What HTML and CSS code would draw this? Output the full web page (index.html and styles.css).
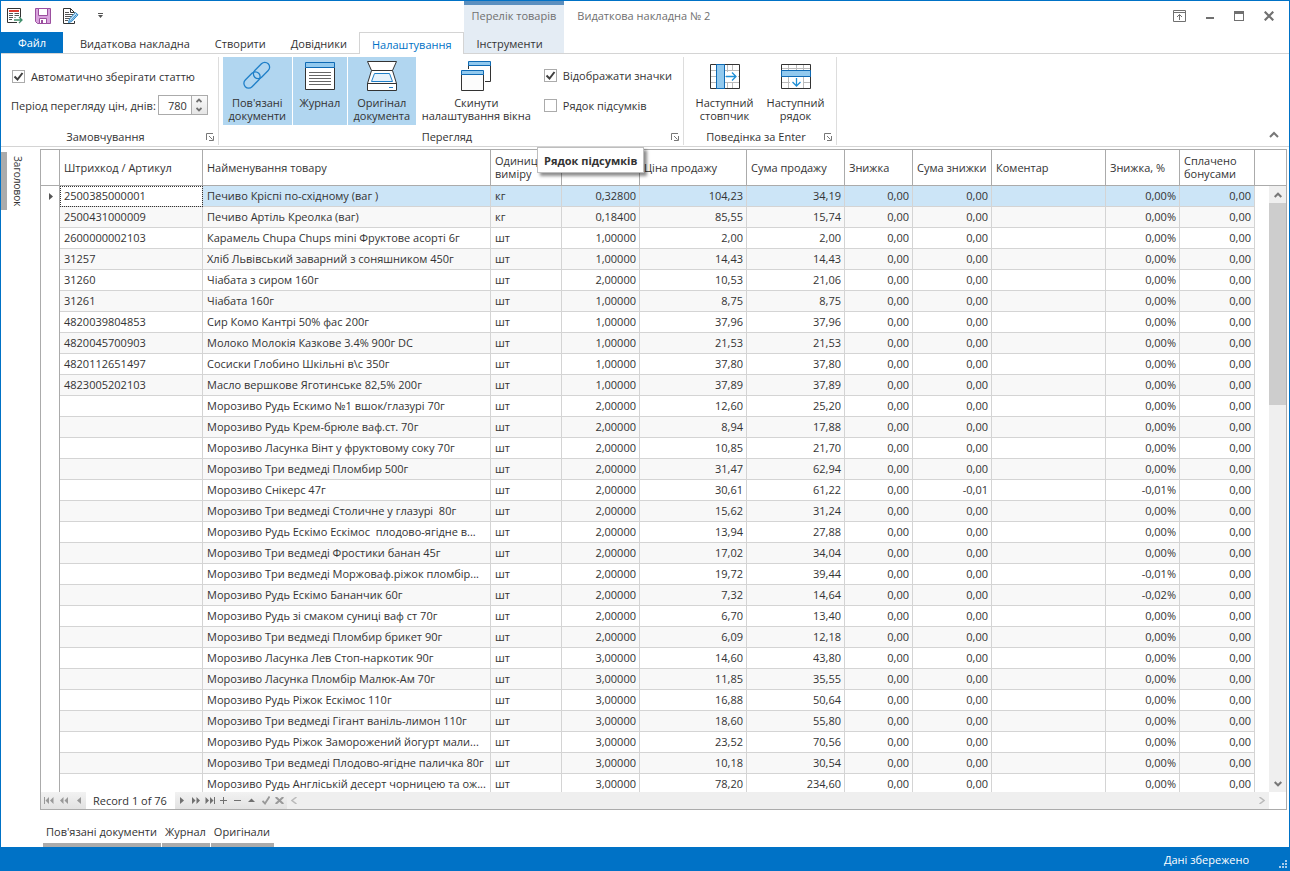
FILE: index.html
```html
<!DOCTYPE html>
<html lang="uk">
<head>
<meta charset="utf-8">
<title>Видаткова накладна № 2</title>
<link rel="stylesheet" href="styles.css">
</head>
<body>
<div class="window">
  <header class="header">
    <div class="quick">
      <button class="quick-btn" aria-label="Провести"><svg width="16" height="16" viewBox="0 0 16 16" fill="none"><path d="M10 14.500H.5V.5h13v9" stroke="#333"/><path d="M2 2h10v2H2z" fill="#e03c31"/><path d="M2 5.500h4M7.500 5.500h4.500M2 7.500h4M7.500 7.500h4.500M2 9.500h4M7.500 9.500h1M2 11.500h3" stroke="#555"/><path d="M7 12h8M12 9l3 3-3 3" stroke="#3f8f6b" stroke-width="1.300"/></svg></button>
      <button class="quick-btn" aria-label="Зберегти"><svg width="16" height="16" viewBox="0 0 16 16"><path d="M.5.5h15v15h-13l-2-2z" fill="#d9a3dd" stroke="#9b4f9f"/><path d="M3.500.5h9v7h-9zM4.500 10.500h7v5h-7z" fill="#fff" stroke="#9b4f9f"/><path d="M6 12h2v3H6z" fill="#9b4f9f"/></svg></button>
      <button class="quick-btn" aria-label="Редагувати"><svg width="16" height="16" viewBox="0 0 16 16" fill="none"><path d="M11.500 13v2.500H.5V.5h7l4 4" stroke="#333"/><path d="M7.500.5v4h4" stroke="#333"/><path d="M2 4.500h4M2 6.500h8M2 8.500h7M2 10.500h5M2 12.500h3" stroke="#555"/><path d="M5.500 14.500l1-3.500 6-6.500 2.500 2.300-6.300 6.700z" fill="#c9e3f6" stroke="#2a86c8"/><path d="M7.500 13l6-6.500" stroke="#2a86c8"/></svg></button>
      <button class="quick-menu" aria-label="Налаштувати панель"><svg width="5" height="5" viewBox="0 0 5 5"><path d="M0 0h5v1H0zM0 2h5L2.500 5z" fill="#555"/></svg></button>
    </div>
    <div class="context-title">Перелік товарів</div>
    <div class="title-row">
      <h1 class="title">Видаткова накладна № 2</h1>
      <div class="window-buttons">
        <button aria-label="Параметри стрічки"><svg width="13" height="12" viewBox="0 0 13 12" fill="none" stroke="#707070"><path d="M.5.5h12v11H.5zM0 2.500h13M6.500 10V4.500M4 7l2.500-2.500L9 7"/></svg></button>
        <button aria-label="Згорнути"><svg width="8" height="12" viewBox="0 0 8 12"><path d="M0 7h8v2H0z" fill="#707070"/></svg></button>
        <button aria-label="Розгорнути"><svg width="10" height="10" viewBox="0 0 10 10"><path d="M0 0h10v10H0zM1 3v6h8V3z" fill="#707070" fill-rule="evenodd"/></svg></button>
        <button aria-label="Закрити"><svg width="10" height="10" viewBox="0 0 10 10" stroke="#707070" stroke-width="2.200"><path d="M.7.7l8.600 8.600M9.300.7L.7 9.300"/></svg></button>
      </div>
    </div>
    <nav class="tabs">
      <button class="file-tab">Файл</button>
      <button class="tab">Видаткова накладна</button>
      <button class="tab">Створити</button>
      <button class="tab">Довідники</button>
      <button class="tab tab-active">Налаштування</button>
    </nav>
    <div class="context-tabs"><button class="tab">Інструменти</button></div>
    <div class="tabs-rest"></div>
  </header>

  <section class="ribbon">
    <div class="group">
      <div class="group-body defaults">
        <label class="check"><input type="checkbox" checked>Автоматично зберігати статтю</label>
        <div class="period">
          <label for="days">Період перегляду цін, днів:</label>
          <div class="spin">
            <input id="days" type="text" value="780">
            <div class="spin-buttons">
              <button aria-label="Більше"><svg width="6" height="5" viewBox="0 0 6 5" fill="none" stroke="#707070" stroke-width="1.800"><path d="M.5 4L3 1.500 5.500 4"/></svg></button>
              <button aria-label="Менше"><svg width="6" height="5" viewBox="0 0 6 5" fill="none" stroke="#707070" stroke-width="1.800"><path d="M.5 1L3 3.500 5.500 1"/></svg></button>
            </div>
          </div>
        </div>
      </div>
      <footer class="caption"><span>Замовчування</span><button class="launcher" aria-label="Параметри замовчування"><svg width="8" height="8" viewBox="0 0 8 8" fill="none" stroke="#777"><path d="M.5 7V.5H7M3 3l3.500 3.500M7.500 3v4.500H3"/></svg></button></footer>
    </div>

    <div class="group">
      <div class="group-body">
        <div class="big-buttons">
          <button class="big pressed links"><svg width="32" height="32" viewBox="0 0 32 32" fill="none" stroke="#1f7fc8" stroke-width="1.300"><rect x="-9.500" y="-4.800" width="19" height="9.600" rx="4.800" transform="translate(20.500 10.500) rotate(-45)"/><rect x="-9.500" y="-4.800" width="19" height="9.600" rx="4.800" transform="translate(11 20) rotate(-45)"/></svg><span>Пов'язані<br>документи</span></button>
          <button class="big pressed journal"><svg width="32" height="32" viewBox="0 0 32 32"><path d="M1.500 7.500h29v22h-29z" fill="#fff" stroke="#333"/><path d="M1.500 2.500h29v5h-29z" fill="#92c9ee" stroke="#0f6ab4"/><path d="M5 12.500h22M5 15.500h22M5 18.500h22M5 21.500h22M5 24.500h22" stroke="#666"/></svg><span>Журнал</span></button>
          <button class="big pressed original"><svg width="32" height="32" viewBox="0 0 32 32" fill="#fff" stroke="#333"><path d="M1.500 1.500h29l-4 9h-21z"/><path d="M5.500 10.500h21l4 13h-29zM1.500 23.500h29v7h-29z"/><path d="M8.500 13.500h15l3 8h-21z" fill="#e7f2fb" stroke="#1f7fc8"/><path d="M23 27.500h4" stroke="#1f7fc8"/></svg><span>Оригінал<br>документа</span></button>
          <button class="big reset"><svg width="32" height="32" viewBox="0 0 32 32"><path d="M8.500 5.500h22v17h-22z" fill="#fff"/><path d="M30.500 5v16.500H25M8.500 5v4" fill="none" stroke="#333"/><path d="M8.500 1.500h22v4h-22z" fill="#92c9ee" stroke="#0f6ab4"/><path d="M1.500 14.500h22v16h-22z" fill="#fcfcfc" stroke="#333"/><path d="M1.500 10.500h22v4h-22z" fill="#92c9ee" stroke="#0f6ab4"/></svg><span>Скинути<br>налаштування вікна</span></button>
        </div>
        <div class="view-checks">
          <label class="check"><input type="checkbox" checked>Відображати значки</label>
          <label class="check"><input type="checkbox">Рядок підсумків</label>
        </div>
      </div>
      <footer class="caption"><span>Перегляд</span><button class="launcher" aria-label="Параметри перегляду"><svg width="8" height="8" viewBox="0 0 8 8" fill="none" stroke="#777"><path d="M.5 7V.5H7M3 3l3.500 3.500M7.500 3v4.500H3"/></svg></button></footer>
    </div>

    <div class="group">
      <div class="group-body enter">
        <button class="big next"><svg width="32" height="32" viewBox="0 0 32 32" fill="none"><path d="M2 10.500h28M2 16.500h28M2 22.500h28M18.500 5v23M23.500 5v6M23.500 22v6" stroke="#bbb"/><path d="M17 12h12v10H17z" fill="#fff"/><path d="M1.500 4.500h29v24h-29z" stroke="#333"/><path d="M7.500 4.500h8v24h-8z" fill="#92c9ee" stroke="#0f6ab4"/><path d="M17 16.500h10M23 12.500l4 4-4 4" stroke="#1f8fd6" stroke-width="1.300"/></svg><span>Наступний<br>стовпчик</span></button>
        <button class="big next"><svg width="32" height="32" viewBox="0 0 32 32" fill="none"><path d="M2 8.500h28M2 22.500h28M8.500 5v23M16.500 5v6M23.500 5v23" stroke="#bbb"/><path d="M10 17h13v11H10z" fill="#fff"/><path d="M1.500 4.500h29v24h-29z" stroke="#333"/><path d="M1.500 10.500h29v6h-29z" fill="#92c9ee" stroke="#0f6ab4"/><path d="M16.500 18v8M12.500 22l4 4 4-4" stroke="#1f8fd6" stroke-width="1.300"/></svg><span>Наступний<br>рядок</span></button>
      </div>
      <footer class="caption"><span>Поведінка за Enter</span><button class="launcher" aria-label="Параметри Enter"><svg width="8" height="8" viewBox="0 0 8 8" fill="none" stroke="#777"><path d="M.5 7V.5H7M3 3l3.500 3.500M7.500 3v4.500H3"/></svg></button></footer>
    </div>
    <button class="collapse" aria-label="Згорнути стрічку"><svg width="10" height="7" viewBox="0 0 10 7" fill="none" stroke="#777" stroke-width="2"><path d="M1 6l4-4 4 4"/></svg></button>
    <div class="tooltip" role="tooltip">Рядок підсумків</div>
  </section>

  <main class="workspace">
    <aside class="side"><button class="side-tab">Заголовок</button></aside>
    <section class="grid">
      <div class="grid-view">
        <table class="items">
          <colgroup><col class="c-mark"><col class="c-code"><col class="c-name"><col class="c-unit"><col class="c-qty"><col class="c-price"><col class="c-sum"><col class="c-disc"><col class="c-dsum"><col class="c-note"><col class="c-pct"><col class="c-bonus"><col></colgroup>
          <thead>
            <tr><th></th><th>Штрихкод / Артикул</th><th>Найменування товару</th><th>Одиниц<br>виміру</th><th aria-label="Кількість"></th><th>Ціна продажу</th><th>Сума продажу</th><th>Знижка</th><th>Сума знижки</th><th>Коментар</th><th>Знижка, %</th><th>Сплачено<br>бонусами</th><th class="fill"></th></tr>
          </thead>
          <tbody id="rows"></tbody>
        </table>
        <div class="vscroll">
          <button aria-label="Вгору"><svg width="8" height="6" viewBox="0 0 8 6" fill="none" stroke="#777" stroke-width="2"><path d="M.7 5L4 1.700 7.300 5"/></svg></button>
          <div class="thumb"></div>
          <button class="down" aria-label="Вниз"><svg width="8" height="6" viewBox="0 0 8 6" fill="none" stroke="#777" stroke-width="2"><path d="M.7 1L4 4.300 7.300 1"/></svg></button>
        </div>
      </div>
      <div class="navigator">
        <div class="nav-back">
          <button aria-label="Перший"><svg width="10" height="7" viewBox="0 0 10 7" fill="#999"><path d="M0 0h1v7H0zM5 0v7L1.500 3.500zM9.500 0v7L6 3.500z"/></svg></button>
          <button aria-label="Попередня сторінка"><svg width="8" height="7" viewBox="0 0 8 7" fill="#999"><path d="M3.500 0v7L0 3.500zM8 0v7L4.500 3.500z"/></svg></button>
          <button aria-label="Попередній"><svg width="4" height="7" viewBox="0 0 4 7" fill="#999"><path d="M4 0v7L0 3.500z"/></svg></button>
        </div>
        <span class="record">Record 1 of 76</span>
        <div class="nav-next">
          <button aria-label="Наступний"><svg width="4" height="7" viewBox="0 0 4 7" fill="#707070"><path d="M0 0v7l4-3.500z"/></svg></button>
          <button aria-label="Наступна сторінка"><svg width="8" height="7" viewBox="0 0 8 7" fill="#707070"><path d="M0 0v7l3.500-3.500zM4.500 0v7L8 3.500z"/></svg></button>
          <button aria-label="Останній"><svg width="10" height="7" viewBox="0 0 10 7" fill="#707070"><path d="M9 0h1v7H9zM.5 0v7L4 3.500zM5 0v7l3.500-3.500z"/></svg></button>
          <button aria-label="Додати"><svg width="7" height="7" viewBox="0 0 7 7" fill="#707070"><path d="M3 0h1v7H3zM0 3h7v1H0z"/></svg></button>
          <button aria-label="Видалити"><svg width="7" height="7" viewBox="0 0 7 7" fill="#707070"><path d="M0 3h7v1H0z"/></svg></button>
          <button aria-label="Редагувати рядок"><svg width="7" height="7" viewBox="0 0 7 7" fill="#707070"><path d="M0 5h7L3.500 1.500z"/></svg></button>
          <button aria-label="Застосувати"><svg width="8" height="9" viewBox="0 0 8 9" fill="none" stroke="#999" stroke-width="1.800"><path d="M.5 5L3 7.500 7.500.5"/></svg></button>
          <button aria-label="Скасувати"><svg width="9" height="7" viewBox="0 0 9 7" fill="none" stroke="#999" stroke-width="2"><path d="M.7 0l7.600 7M8.300 0L.7 7"/></svg></button>
        </div>
        <div class="hscroll">
          <button aria-label="Вліво"><svg width="6" height="7" viewBox="0 0 6 7" fill="none" stroke="#bbb" stroke-width="1.500"><path d="M5.500 0L1 3.500 5.500 7"/></svg></button>
          <button aria-label="Вправо"><svg width="6" height="7" viewBox="0 0 6 7" fill="none" stroke="#bbb" stroke-width="1.500"><path d="M.5 0L5 3.500.5 7"/></svg></button>
        </div>
      </div>
    </section>
  </main>

  <nav class="panels">
    <button>Пов'язані документи</button>
    <button>Журнал</button>
    <button>Оригінали</button>
  </nav>
  <footer class="status">
    <span>Дані збережено</span>
    <svg width="8" height="8" viewBox="0 0 8 8" fill="#a8cdeb"><path d="M6 0h2v2H6zM3 3h2v2H3zM6 3h2v2H6zM0 6h2v2H0zM3 6h2v2H3zM6 6h2v2H6z"/></svg>
  </footer>
</div>
<script src="app.js"></script>
</body>
</html>
```
FILE: styles.css
```css
* { box-sizing: border-box; }
body {
  margin: 0;
  font: 11px/13px "Open Sans", "Noto Sans", sans-serif;
  color: #333;
  background: #fff;
}
button, input { font: inherit; color: inherit; }
button {
  display: flex;
  align-items: center;
  justify-content: center;
  padding: 0;
  border: 0;
  background: none;
  white-space: nowrap;
}
svg { display: block; flex: none; }

.window {
  display: flex;
  flex-direction: column;
  height: 100vh;
  border: 1px solid #0072c6;
  border-bottom: 0;
}

/* Title bar and ribbon tabs */
.header {
  display: grid;
  grid-template-columns: auto auto 1fr;
  grid-template-rows: 31px 22px;
}
.quick { display: flex; align-items: center; gap: 12px; padding: 0 0 2px 6px; }
.quick-menu { margin-left: 7px; }
.context-title {
  padding: 4px 8px 0;
  border-top: 4px solid #5b8fbf;
  background: #e4ecf4;
  color: #707070;
  white-space: nowrap;
}
.title-row {
  display: flex;
  align-items: center;
  justify-content: space-between;
  padding: 0 15px 2px 13px;
}
.title { margin: 0; font: inherit; color: #707070; }
.window-buttons { display: flex; gap: 20px; }
.tabs { display: flex; border-bottom: 1px solid #d4d4d4; }
.file-tab { width: 62px; margin-right: 4px; background: #0072c6; color: #fff; }
.tab { padding: 2px 12px 0 13px; }
.tab-active {
  margin-bottom: -1px;
  padding: 1px 11px 0 12px;
  border: 1px solid #d4d4d4;
  border-bottom: 0;
  background: #fff;
  color: #0072c6;
}
.context-tabs { display: flex; background: #e4ecf4; border-bottom: 1px solid #d4d4d4; }
.tabs-rest { border-bottom: 1px solid #d4d4d4; }

/* Ribbon */
.ribbon {
  position: relative;
  display: flex;
  padding: 3px 0 1px;
  border-bottom: 1px solid #d4d4d4;
}
.group {
  display: flex;
  flex-direction: column;
  padding: 0 4px;
  border-right: 1px solid #ddd;
}
.group-body { display: flex; height: 71px; }
.defaults { flex-direction: column; padding: 12px 5px 0; gap: 12px; }
.check { display: flex; align-items: center; gap: 6px; height: 14px; white-space: nowrap; }
.check input {
  appearance: none;
  width: 13px;
  height: 13px;
  margin: 0;
  border: 1px solid #ababab;
  background: #fff;
}
.check input:checked {
  background: url("data:image/svg+xml,%3Csvg xmlns='http://www.w3.org/2000/svg' viewBox='0 0 11 11'%3E%3Cpath d='M1.500 5.500l3 3L9.500 2' fill='none' stroke='%23404040' stroke-width='2'/%3E%3C/svg%3E");
}
.defaults .check { padding-left: 2px; }
.period { display: flex; align-items: center; gap: 2px; padding-left: 1px; white-space: nowrap; }
.spin { display: flex; width: 50px; height: 20px; border: 1px solid #ababab; }
.spin input { width: 32px; padding: 0 4px; border: 0; text-align: right; outline: 0; }
.spin-buttons {
  display: flex;
  flex: 1;
  flex-direction: column;
  border-left: 1px solid #ababab;
  background: linear-gradient(#fafafa, #e6e6e6);
}
.spin-buttons button { flex: 1; }
.defaults { padding-right: 6px; }
.caption { display: flex; align-items: center; height: 17px; }
.caption span { flex: 1; text-align: center; }
.big-buttons { display: flex; gap: 1px; }
.big {
  flex-direction: column;
  justify-content: flex-start;
  gap: 4px;
  height: 68px;
  padding-top: 3px;
}
.big span { line-height: 13px; }
.pressed { background: #b1d6f0; }
.links { width: 69px; }
.journal { width: 54px; }
.original { width: 68px; }
.reset { width: 119px; }
.view-checks {
  display: flex;
  flex-direction: column;
  gap: 16px;
  padding: 11px 7px 0 8px;
}
.enter { padding: 0 1px; }
.next { width: 71px; }
.collapse { align-self: flex-end; margin: 0 10px 7px auto; }
.tooltip {
  position: absolute;
  top: 93px;
  left: 536px;
  z-index: 2;
  padding: 6px 6px 5px;
  border: 1px solid #bebebe;
  background: #fff;
  box-shadow: 3px 3px 3px rgba(0, 0, 0, .45);
  font-weight: bold;
  white-space: nowrap;
}

/* Workspace */
.workspace { display: flex; flex: 1; min-height: 0; padding: 2px 2px 0 0; }
.side { width: 39px; padding-top: 3px; }
.side-tab {
  height: 58px;
  padding: 0 0 0 10px;
  box-shadow: inset 6px 0 #ababab;
  font-size: 10px;
  writing-mode: vertical-rl;
}
.grid {
  display: flex;
  flex: 1;
  flex-direction: column;
  min-width: 0;
  border: 1px solid #ababab;
}
.grid-view { position: relative; flex: 1; min-height: 0; overflow: hidden; }
.items {
  width: 100%;
  border-spacing: 0;
  table-layout: fixed;
}
.c-mark { width: 19px; }
.c-code { width: 143px; }
.c-name { width: 288px; }
.c-unit { width: 71px; }
.c-qty { width: 78px; }
.c-price { width: 107px; }
.c-sum { width: 98px; }
.c-disc { width: 68px; }
.c-dsum { width: 79px; }
.c-note { width: 114px; }
.c-pct { width: 74px; }
.c-bonus { width: 75px; }
.items th {
  height: 36px;
  padding: 0 4px 1px;
  border-right: 1px solid #ababab;
  border-bottom: 1px solid #ababab;
  font-weight: normal;
  text-align: left;
  white-space: nowrap;
}
.items td {
  height: 21px;
  padding: 0 4px 2px;
  border-right: 1px solid #d4d4d4;
  border-bottom: 1px solid #d4d4d4;
  overflow: hidden;
  text-overflow: clip;
  white-space: pre;
}
.items tr:nth-child(even) td { background: #f8f8f8; }
.items td.num { padding-right: 3px; text-align: right; }
.items tr td.mark { padding: 0 0 0 8px; border-right-color: #ababab; border-bottom: 0; background: #fff; }
.items .fill, .items tr td.fill { border-right: 0; background: #fff; }
.items td.fill { border-bottom: 0; }
.items tr.selected td { background: #cce5f7; }
.items tr.selected td.mark, .items tr.selected td.fill { background: #fff; }
.items tr.selected td.focused { background: #fff; outline: 1px dotted #333; outline-offset: -1px; }
.vscroll {
  position: absolute;
  top: 36px;
  right: 0;
  bottom: 0;
  display: flex;
  flex-direction: column;
  width: 17px;
  background: #efefef;
}
.vscroll button { height: 17px; }
.thumb { height: 202px; background: #cdcdcd; }
.down { margin-top: auto; }
.navigator {
  display: flex;
  height: 17px;
  padding-right: 17px;
}
.nav-back, .nav-next { display: flex; background: linear-gradient(#f2f2f2, #e2e2e2); }
.nav-back button { width: 15px; }
.nav-next button { width: 14px; }
.record { padding: 2px 8px 0 7px; white-space: nowrap; }
.hscroll { display: flex; flex: 1; justify-content: space-between; background: #efefef; }
.hscroll button { width: 15px; }

/* Docked panels and status bar */
.panels { display: flex; gap: 1px; padding: 13px 0 0 42px; }
.panels button { height: 24px; padding: 0 4px 3px 3px; border-bottom: 4px solid #ababab; }
.status {
  display: flex;
  align-items: center;
  justify-content: flex-end;
  gap: 30px;
  height: 24px;
  padding-right: 2px;
  background: #0072c6;
  color: #fff;
}
.status svg { align-self: flex-end; margin-bottom: 3px; }
```
FILE: app.js
```js
const data = `2500385000001|Печиво Кріспі по-східному (ваг )|кг|0,32800|104,23|34,19
2500431000009|Печиво Артіль Креолка (ваг)|кг|0,18400|85,55|15,74
2600000002103|Карамель Chupa Chups mini Фруктове асорті 6г|шт|1,00000|2,00|2,00
31257|Хліб Львівський заварний з соняшником 450г|шт|1,00000|14,43|14,43
31260|Чіабата з сиром 160г|шт|2,00000|10,53|21,06
31261|Чіабата 160г|шт|1,00000|8,75|8,75
4820039804853|Сир Комо Кантрі 50% фас 200г|шт|1,00000|37,96|37,96
4820045700903|Молоко Молокія Казкове 3.4% 900г DC|шт|1,00000|21,53|21,53
4820112651497|Сосиски Глобино Шкільні в\\с 350г|шт|1,00000|37,80|37,80
4823005202103|Масло вершкове Яготинське 82,5% 200г|шт|1,00000|37,89|37,89
|Морозиво Рудь Ескимо №1 вшок/глазурі 70г|шт|2,00000|12,60|25,20
|Морозиво Рудь Крем-брюле ваф.ст. 70г|шт|2,00000|8,94|17,88
|Морозиво Ласунка Вінт у фруктовому соку 70г|шт|2,00000|10,85|21,70
|Морозиво Три ведмеді Пломбир 500г|шт|2,00000|31,47|62,94
|Морозиво Снікерс 47г|шт|2,00000|30,61|61,22|-0,01|-0,01%
|Морозиво Три ведмеді Столичне у глазурі  80г|шт|2,00000|15,62|31,24
|Морозиво Рудь Ескімо Ескімос  плодово-ягідне в...|шт|2,00000|13,94|27,88
|Морозиво Три ведмеді Фростики банан 45г|шт|2,00000|17,02|34,04
|Морозиво Три ведмеді Моржоваф.ріжок пломбір...|шт|2,00000|19,72|39,44|0,00|-0,01%
|Морозиво Рудь Ескімо Бананчик 60г|шт|2,00000|7,32|14,64|0,00|-0,02%
|Морозиво Рудь зі смаком суниці ваф ст 70г|шт|2,00000|6,70|13,40
|Морозиво Три ведмеді Пломбир брикет 90г|шт|2,00000|6,09|12,18
|Морозиво Ласунка Лев Стоп-наркотик 90г|шт|3,00000|14,60|43,80
|Морозиво Ласунка Пломбір Малюк-Ам 70г|шт|3,00000|11,85|35,55
|Морозиво Рудь Ріжок Ескімос 110г|шт|3,00000|16,88|50,64
|Морозиво Три ведмеді Гігант ваніль-лимон 110г|шт|3,00000|18,60|55,80
|Морозиво Рудь Ріжок Заморожений йогурт мали...|шт|3,00000|23,52|70,56
|Морозиво Три ведмеді Плодово-ягідне паличка 80г|шт|3,00000|10,18|30,54
|Морозиво Рудь Англіській десерт чорницею та ож...|шт|3,00000|78,20|234,60`;

const marker = '<svg width="4" height="7" viewBox="0 0 4 7" fill="#555"><path d="M0 0v7l4-3.500z"/></svg>';

document.getElementById('rows').innerHTML = data.split('\n').map((line, i) => {
  const [code, name, unit, qty, price, sum, dsum = '0,00', pct = '0,00%'] = line.split('|');
  const num = v => `<td class="num">${v}</td>`;
  return `<tr class="${i ? '' : 'selected'}"><td class="mark">${i ? '' : marker}</td>` +
    `<td class="${i ? '' : 'focused'}">${code}</td><td>${name}</td><td>${unit}</td>` +
    num(qty) + num(price) + num(sum) + num('0,00') + num(dsum) + '<td></td>' +
    num(pct) + num('0,00') + '<td class="fill"></td></tr>';
}).join('');
```
